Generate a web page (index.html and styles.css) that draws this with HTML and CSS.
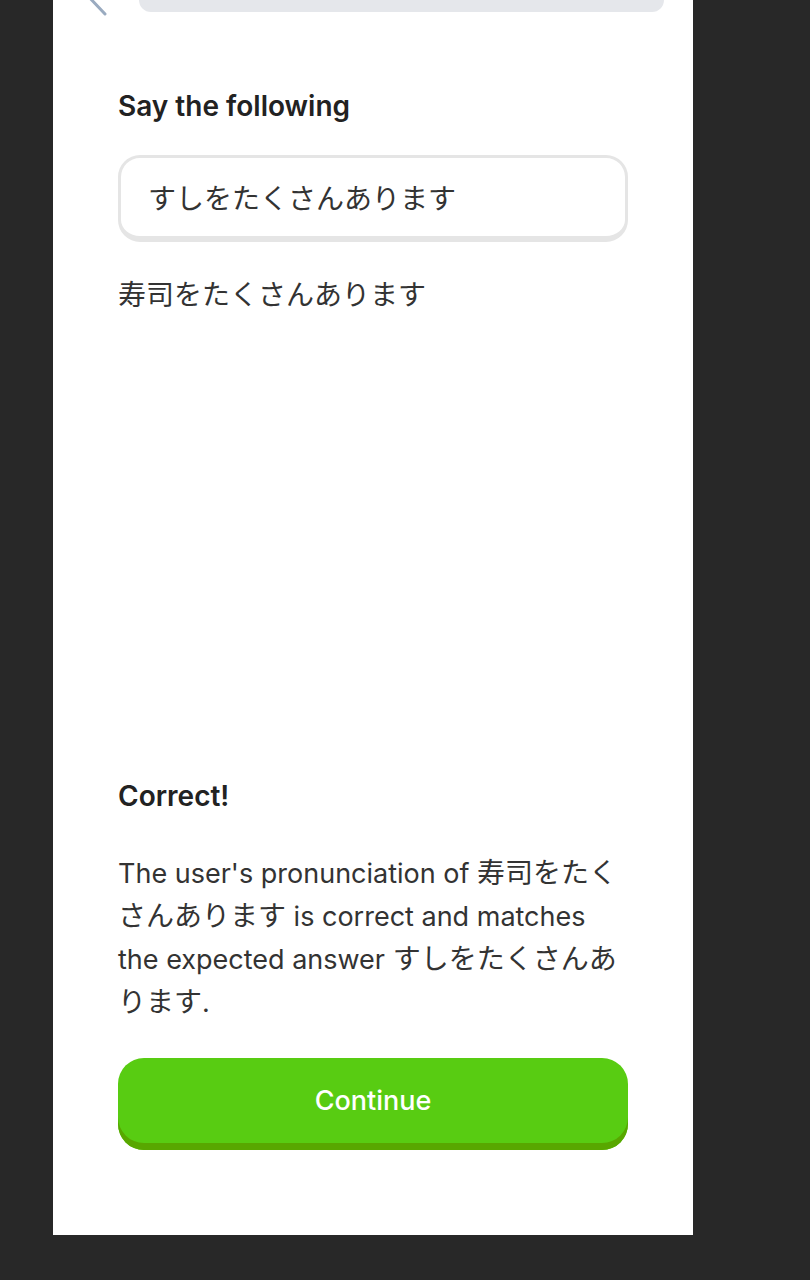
FILE: index.html
```html
<!DOCTYPE html>
<html lang="en">
<head>
<meta charset="utf-8">
<link rel="stylesheet" href="styles.css">
</head>
<body>
<div class="panel">
  <div class="topbar">
    <svg class="back" width="30" height="20" viewBox="0 0 30 20"><path d="M44 -44 L4 -5 L22 14" fill="none" stroke="#9aabc0" stroke-width="3" stroke-linecap="round"/></svg>
    <div class="progress"></div>
  </div>
  <main class="content">
    <h2 class="heading">Say the following</h2>
    <div class="prompt">すしをたくさんあります</div>
    <div class="transcript">寿司をたくさんあります</div>
    <div class="spacer"></div>
    <h3 class="result">Correct!</h3>
    <p class="feedback">The user's pronunciation of <span class="ja">寿司をたくさんあります</span> is correct and matches the expected answer <span class="ja">すしをたくさんあります</span>.</p>
    <button class="continue">Continue</button>
  </main>
</div>
</body>
</html>
```
FILE: styles.css
```css
html, body {
  margin: 0;
  padding: 0;
  background: #282828;
  height: 1280px;
  overflow: hidden;
}
body {
  font-family: Inter, "Noto Sans CJK JP", sans-serif;
  color: #222;
}
.panel {
  margin-left: 53px;
  width: 640px;
  height: 1235px;
  background: #fff;
  display: flex;
  flex-direction: column;
}
.topbar {
  display: flex;
  align-items: flex-start;
  height: 12px;
  padding-left: 86px;
  padding-right: 29px;
  position: relative;
}
.back {
  position: absolute;
  left: 30px;
  top: 0;
}
.progress {
  flex: 1;
  height: 12px;
  background: #e5e7eb;
  border-radius: 0 0 12px 12px;
}
.content {
  flex: 1;
  display: flex;
  flex-direction: column;
  padding: 0 65px 85px;
}
.heading {
  margin: 75px 0 0;
  font-size: 28px;
  font-weight: 600;
  line-height: 38px;
  color: #222;
}
.prompt {
  margin-top: 30px;
  border: 3px solid #e5e5e5;
  border-bottom-width: 6px;
  border-radius: 22px;
  padding: 16px 0 16px 27px;
  line-height: 46px;
  font-size: 28px;
  color: #333;
  font-family: "Noto Sans CJK JP", sans-serif;
}
.transcript {
  margin-top: 31px;
  font-size: 28px;
  line-height: 40px;
  color: #333;
  font-family: "Noto Sans CJK JP", sans-serif;
}
.spacer {
  flex: 1;
}
.result {
  margin: 0;
  font-size: 28px;
  font-weight: 600;
  line-height: 38px;
  color: #222;
}
.feedback {
  margin: 37px 0 0;
  padding-right: 3px;
  font-size: 27px;
  line-height: 43px;
  color: #333;
}
.ja {
  font-family: "Noto Sans CJK JP", sans-serif;
  font-size: 28px;
  line-height: 1;
}
.continue {
  margin-top: 34px;
  height: 92px;
  border: none;
  border-radius: 26px;
  background: #58cc12;
  box-shadow: inset 0 -7px 0 #58a700;
  color: #fff;
  font-family: Inter, sans-serif;
  font-size: 27px;
  font-weight: 500;
  padding: 0 0 7px;
}
```
